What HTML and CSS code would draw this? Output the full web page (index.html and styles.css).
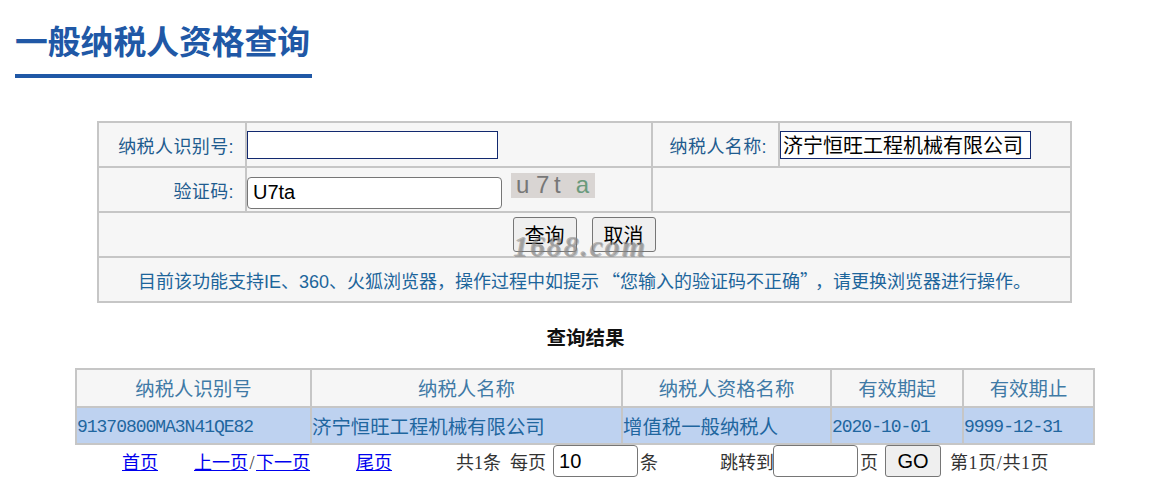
FILE: index.html
```html
<!DOCTYPE html>
<html lang="zh-CN">
<head>
<meta charset="utf-8">
<title>一般纳税人资格查询</title>
<link rel="stylesheet" href="styles.css">
</head>
<body>
<header class="head"><h1 class="title">一般纳税人资格查询</h1></header>
<form class="query-wrap">
  <table class="query">
    <colgroup><col class="q1"><col class="q2"><col class="q3"><col class="q4"></colgroup>
    <tr>
      <td class="label">纳税人识别号:</td>
      <td class="field"><input class="flat id-input" type="text"></td>
      <td class="label">纳税人名称:</td>
      <td class="field"><input class="flat name-input" type="text" value="济宁恒旺工程机械有限公司"></td>
    </tr>
    <tr>
      <td class="label">验证码:</td>
      <td class="field captcha-cell"><input class="round code-input" type="text" value="U7ta"><span class="captcha"><i>u</i><i>7</i><i>t</i><i class="green">a</i></span></td>
      <td colspan="2"></td>
    </tr>
    <tr>
      <td colspan="4" class="actions">
        <button class="btn" type="button">查询</button><button class="btn" type="button">取消</button>
        <span class="mark">1688.com</span>
      </td>
    </tr>
    <tr>
      <td colspan="4" class="notice">目前该功能支持IE、360、火狐浏览器，操作过程中如提示<span class="cjk quote-open">“</span>您输入的验证码不正确<span class="cjk quote-close">”</span>，请更换浏览器进行操作。</td>
    </tr>
  </table>
</form>
<h2 class="result-title">查询结果</h2>
<table class="result">
  <colgroup><col class="r1"><col class="r2"><col class="r3"><col class="r4"><col class="r5"></colgroup>
  <tr><th>纳税人识别号</th><th>纳税人名称</th><th>纳税人资格名称</th><th>有效期起</th><th>有效期止</th></tr>
  <tr class="hit"><td class="mono">91370800MA3N41QE82</td><td>济宁恒旺工程机械有限公司</td><td>增值税一般纳税人</td><td class="mono">2020-10-01</td><td class="mono">9999-12-31</td></tr>
</table>
<nav class="pager">
  <a class="p-first" href="#">首页</a>
  <span class="p-mid"><a href="#">上一页</a><span class="slash">/</span><a href="#">下一页</a></span>
  <a class="p-last" href="#">尾页</a>
  <span class="p-total">共1条&nbsp;&nbsp;每页</span>
  <input class="round size-input" type="text" value="10">
  <span class="p-unit">条</span>
  <span class="p-jump">跳转到</span>
  <input class="round jump-input" type="text">
  <span class="p-page">页</span>
  <button class="go" type="button">GO</button>
  <span class="p-info">第1页/共1页</span>
</nav>
</body>
</html>
```
FILE: styles.css
```css
* { box-sizing: border-box; }
html, body { margin: 0; padding: 0; background: #fff; }
body { width: 1155px; height: 492px; overflow: hidden; font-family: "Liberation Serif", "Noto Sans CJK SC", serif; color: #1f5c8f; }
.head { padding: 20px 0 0 15px; }
.title { display: inline-block; margin: 0; width: 297px; height: 58px; border-bottom: 4px solid #2058a6; font: bold 32.8px/46px "Liberation Sans", "Noto Sans CJK SC", sans-serif; color: #2058a6; white-space: nowrap; }
.query-wrap { margin: 43px 0 0 97px; width: 973px; }
.query { width: 973px; height: 182px; table-layout: fixed; border-collapse: collapse; background: #f6f6f6; font: 18px "Liberation Sans", "Noto Sans CJK SC", sans-serif; }
.query td { border: 2px solid #c6c6c6; padding: 0; height: 45px; }
.q1 { width: 148px; } .q2 { width: 406px; } .q3 { width: 127px; } .q4 { width: 292px; }
.query .label { text-align: right; padding-right: 11px; color: #1f5c8f; letter-spacing: .4px; }
input { font: 20px "Liberation Sans", "Noto Sans CJK SC", sans-serif; color: #000; background: #fff; }
.flat { display: block; height: 28px; border: 1px solid #12296f; padding: 0 2px; border-radius: 0; }
.id-input { width: 251px; }
.name-input { width: 251px; }
.round { border: 1px solid #767676; border-radius: 4px; padding: 0 5px; height: 32px; }
.captcha-cell { white-space: nowrap; }
.code-input { width: 255px; vertical-align: top; margin-top: 6px; }
.captcha { display: inline-flex; vertical-align: top; margin: 2px 0 0 9px; width: 84px; height: 25px; background: #d9d5d3; color: #777; font: 24px/24px "Liberation Sans", sans-serif; padding-left: 5px; }
.captcha i { font-style: normal; }
.captcha i:nth-child(2) { margin-left: 6.7px; }
.captcha i:nth-child(3) { margin-left: 4.7px; }
.captcha .green { color: #6a9a7c; margin-left: 15px; }
.actions { position: relative; text-align: center; }
.btn { font: 20px "Liberation Sans", "Noto Sans CJK SC", sans-serif; width: 64px; height: 35px; padding: 0; margin: 0 8px 0 7px; background: #efefef; border: 1px solid #767676; border-radius: 3px; color: #000; vertical-align: middle; }
.mark { position: absolute; left: 414px; top: 19px; font: italic bold 30px/28px "Liberation Serif", serif; letter-spacing: 1.8px; color: rgba(140,140,140,.62); text-shadow: 1px 1px 0 rgba(90,90,90,.35); pointer-events: none; }
.notice { text-align: center; color: #1d659b; white-space: nowrap; }
.cjk { font-family: "Noto Sans CJK SC", sans-serif; }
.quote-open { margin-left: 3px; }
.quote-close { margin-right: 6px; }
.result-title { margin: 25px 0 0; width: 1171px; height: 22px; text-align: center; font: bold 19.5px/22px "Liberation Serif", "Noto Sans CJK SC", serif; color: #111; }
.result { margin: 18px 0 0 75px; width: 1018px; height: 75px; table-layout: fixed; border-collapse: collapse; font: 19.4px "Liberation Serif", "Noto Sans CJK SC", serif; }
.result th, .result td { border: 2px solid #c6c6c6; padding: 0; height: 37.5px; overflow: hidden; white-space: nowrap; }
.result th { font-weight: normal; background: #f6f6f6; text-align: center; color: #3f7aa6; }
.hit td { background: #bed2f0; text-align: left; color: #1f669f; }
.result .mono { font-family: "Liberation Mono", monospace; font-size: 18px; letter-spacing: -1.02px; padding-top: 3px; }
.r1 { width: 235px; } .r2 { width: 311px; } .r3 { width: 209px; } .r4 { width: 132px; } .r5 { width: 131px; }
.pager { display: flex; align-items: center; height: 32px; font: 18px "Liberation Serif", "Noto Sans CJK SC", serif; white-space: nowrap; }
.pager a { color: #0000ee; }
.pager span { color: #333; }
.p-first { margin-left: 122px; }
.p-mid { margin-left: 36px; }
.slash { padding: 0 1.5px; }
.p-last { margin-left: 46px; }
.p-total { margin-left: 64px; }
.size-input { width: 85px; height: 32px; margin-left: 7px; }
.p-unit { margin-left: 2px; }
.p-jump { margin-left: 62px; }
.jump-input { width: 85px; height: 32px; margin-left: -1px; }
.p-page { margin-left: 2px; }
.go { margin-left: 7px; width: 56px; height: 32px; font: 20px "Liberation Sans", sans-serif; background: #efefef; border: 1px solid #767676; border-radius: 3px; color: #000; padding: 0; }
.p-info { margin-left: 9px; letter-spacing: .6px; }
```
